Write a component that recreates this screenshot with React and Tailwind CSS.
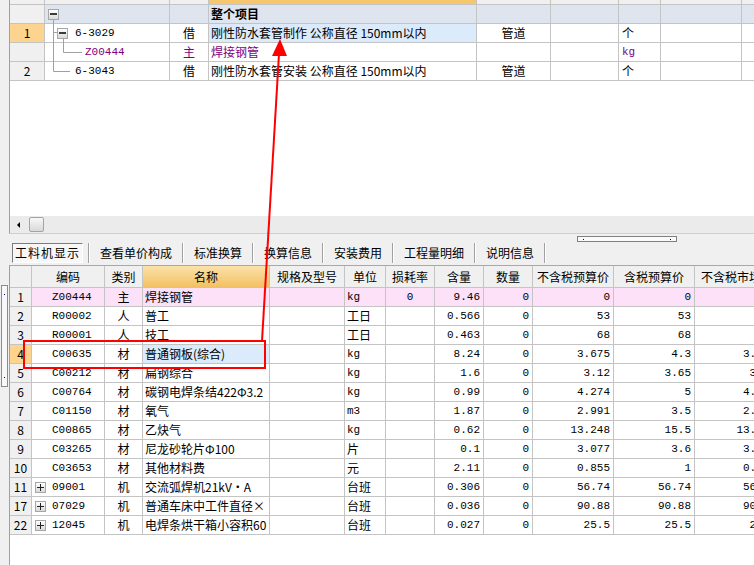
import React from 'react';

const cjk = "font-['Noto_Sans_CJK_SC',sans-serif] text-[12px]";
const mono = "font-['Liberation_Mono','Noto_Sans_CJK_SC',monospace] text-[11px]";
const line = 'border-[#c4c4c4]';

function MinusBox() {
  return (
    <span className="flex h-[11px] w-[11px] shrink-0 items-center justify-center border border-[#a6a6a6] bg-linear-to-b from-white to-[#d9d9d9]">
      <span className="h-[2px] w-[7px] bg-[#3a3a3a]" />
    </span>
  );
}

function PlusBox() {
  return (
    <span className="relative flex h-[11px] w-[11px] shrink-0 items-center justify-center border border-[#a6a6a6] bg-linear-to-b from-white to-[#d9d9d9]">
      <span className="h-[1px] w-[7px] bg-[#222]" />
      <span className="absolute h-[7px] w-[1px] bg-[#222]" />
    </span>
  );
}

const topRows = [
  { num: '1', level: 1, box: true, code: '6-3029', cat: '借', name: '刚性防水套管制作 公称直径 150mm以内', c5: '管道', unit: '个', active: true },
  { num: '', level: 2, code: 'Z00444', cat: '主', name: '焊接钢管', c5: '', unit: 'kg', purple: true },
  { num: '2', level: 1, code: '6-3043', cat: '借', name: '刚性防水套管安装 公称直径 150mm以内', c5: '管道', unit: '个' },
];

function TopGrid() {
  const c = `h-full shrink-0 border-r ${line}`;
  return (
    <div className={`${cjk} leading-[18px] text-black`}>
      <div className={`flex h-[5px] border-b ${line} bg-[#f0f0f0]`}>
        <div className={`${c} w-[35px]`} />
        <div className={`${c} w-[125px]`} />
        <div className={`${c} w-[39px]`} />
        <div className={`${c} w-[268px] bg-[#f5c66e]`} />
        <div className={`${c} w-[74px]`} />
        <div className={`${c} w-[68px]`} />
        <div className={`${c} w-[42px]`} />
        <div className={`${c} w-[81px]`} />
        <div className="flex-1" />
      </div>
      <div className={`flex h-[19px] border-b ${line} bg-[#dee5ee]`}>
        <div className={`${c} w-[35px] bg-[#f0f0f0]`} />
        <div className={`${c} flex w-[125px] items-center pl-[3px]`}>
          <MinusBox />
        </div>
        <div className={`${c} w-[39px]`} />
        <div className={`${c} w-[268px] pl-[2px] font-bold`}>整个项目</div>
        <div className={`${c} w-[74px]`} />
        <div className={`${c} w-[68px]`} />
        <div className={`${c} w-[42px]`} />
        <div className={`${c} w-[81px]`} />
        <div className="flex-1" />
      </div>
      {topRows.map((r, i) => (
        <div key={i} className={`flex h-[19px] border-b ${line} bg-white ${r.purple ? 'text-[#800080]' : ''}`}>
          <div className={`${c} w-[35px] text-center ${r.active ? 'bg-[#fdd48f]' : 'bg-[#f0f0f0]'} text-black`}>{r.num}</div>
          <div className={`${c} flex w-[125px] items-center ${r.box ? 'pl-[12px]' : r.level === 2 ? 'pl-[40px]' : 'pl-[30px]'}`}>
            {r.box && <MinusBox />}
            <span className={`${mono} ${r.box ? 'ml-[7px]' : ''}`}>{r.code}</span>
          </div>
          <div className={`${c} w-[39px] text-center`}>{r.cat}</div>
          <div className={`${c} w-[268px] whitespace-nowrap pl-[2px] ${r.active ? 'bg-[#dcebfb]' : ''}`}>{r.name}</div>
          <div className={`${c} w-[74px] text-center`}>{r.c5}</div>
          <div className={`${c} w-[68px]`} />
          <div className={`${c} w-[42px] pl-[3px] ${r.unit === 'kg' ? mono : ''}`}>{r.unit}</div>
          <div className={`${c} w-[81px]`} />
          <div className="flex-1" />
        </div>
      ))}
    </div>
  );
}

const cols = [22, 73, 38, 127, 75, 41, 49, 49, 49, 81, 81, 85];
const heads = ['', '编码', '类别', '名称', '规格及型号', '单位', '损耗率', '含量', '数量', '不含税预算价', '含税预算价', '不含税市场价'];

const rows = [
  { n: '1', code: 'Z00444', cat: '主', name: '焊接钢管', unit: 'kg', loss: '0', qty: '9.46', cnt: '0', p1: '0', p2: '0', p3: '', pink: true },
  { n: '2', code: 'R00002', cat: '人', name: '普工', unit: '工日', qty: '0.566', cnt: '0', p1: '53', p2: '53', p3: '' },
  { n: '3', code: 'R00001', cat: '人', name: '技工', unit: '工日', qty: '0.463', cnt: '0', p1: '68', p2: '68', p3: '' },
  { n: '4', code: 'C00635', cat: '材', name: '普通钢板(综合)', unit: 'kg', qty: '8.24', cnt: '0', p1: '3.675', p2: '4.3', p3: '3.675', active: true },
  { n: '5', code: 'C00212', cat: '材', name: '扁钢综合', unit: 'kg', qty: '1.6', cnt: '0', p1: '3.12', p2: '3.65', p3: '3.12' },
  { n: '6', code: 'C00764', cat: '材', name: '碳钢电焊条结422Φ3.2', unit: 'kg', qty: '0.99', cnt: '0', p1: '4.274', p2: '5', p3: '4.274' },
  { n: '7', code: 'C01150', cat: '材', name: '氧气', unit: 'm3', qty: '1.87', cnt: '0', p1: '2.991', p2: '3.5', p3: '2.991' },
  { n: '8', code: 'C00865', cat: '材', name: '乙炔气', unit: 'kg', qty: '0.62', cnt: '0', p1: '13.248', p2: '15.5', p3: '13.248' },
  { n: '9', code: 'C03265', cat: '材', name: '尼龙砂轮片Φ100', unit: '片', qty: '0.1', cnt: '0', p1: '3.077', p2: '3.6', p3: '3.077' },
  { n: '10', code: 'C03653', cat: '材', name: '其他材料费', unit: '元', qty: '2.11', cnt: '0', p1: '0.855', p2: '1', p3: '0.855' },
  { n: '11', code: '09001', cat: '机', name: '交流弧焊机21kV·A', unit: '台班', qty: '0.306', cnt: '0', p1: '56.74', p2: '56.74', p3: '56.74', plus: true },
  { n: '17', code: '07029', cat: '机', name: '普通车床中工件直径×', unit: '台班', qty: '0.036', cnt: '0', p1: '90.88', p2: '90.88', p3: '90.88', plus: true },
  { n: '22', code: '12045', cat: '机', name: '电焊条烘干箱小容积60', unit: '台班', qty: '0.027', cnt: '0', p1: '25.5', p2: '25.5', p3: '25.5', plus: true },
];

function BottomGrid() {
  const c = `h-full shrink-0 overflow-hidden whitespace-nowrap border-r ${line}`;
  const num = `${c} ${mono} pr-[3px] text-right`;
  return (
    <div className={`${cjk} leading-[18px] text-black`}>
      <div className={`flex h-[22px] border-b ${line} bg-[#f0f0f0] leading-[21px]`}>
        {heads.map((h, i) => (
          <div
            key={i}
            style={{ width: cols[i] }}
            className={`${c} text-center ${i === 3 ? 'bg-linear-to-b from-[#fbe1a8] to-[#f3c163]' : ''}`}
          >
            {h}
          </div>
        ))}
      </div>
      {rows.map((r) => (
        <div key={r.n} className={`flex h-[19px] border-b ${line} ${r.pink ? 'bg-[#fce1f9]' : 'bg-white'}`}>
          <div style={{ width: cols[0] }} className={`${c} text-center ${r.active ? 'bg-[#fdd38e]' : 'bg-[#f0f0f0]'}`}>{r.n}</div>
          <div style={{ width: cols[1] }} className={`${c} flex items-center ${r.plus ? 'pl-[3px]' : 'pl-[20px]'}`}>
            {r.plus && <PlusBox />}
            <span className={`${mono} ${r.plus ? 'ml-[6px]' : ''}`}>{r.code}</span>
          </div>
          <div style={{ width: cols[2] }} className={`${c} text-center`}>{r.cat}</div>
          <div style={{ width: cols[3] }} className={`${c} pl-[2px] ${r.active ? 'bg-[#dcebfb]' : ''}`}>{r.name}</div>
          <div style={{ width: cols[4] }} className={c} />
          <div style={{ width: cols[5] }} className={`${c} pl-[2px] ${/^[a-z]/.test(r.unit) ? mono : ''}`}>{r.unit}</div>
          <div style={{ width: cols[6] }} className={`${c} ${mono} text-center`}>{r.loss}</div>
          <div style={{ width: cols[7] }} className={num}>{r.qty}</div>
          <div style={{ width: cols[8] }} className={num}>{r.cnt}</div>
          <div style={{ width: cols[9] }} className={num}>{r.p1}</div>
          <div style={{ width: cols[10] }} className={num}>{r.p2}</div>
          <div style={{ width: cols[11] }} className={num}>{r.p3}</div>
        </div>
      ))}
    </div>
  );
}

const tabs = ['查看单价构成', '标准换算', '换算信息', '安装费用', '工程量明细', '说明信息'];

function Sep() {
  return <span className="h-[20px] w-[2px] shrink-0 border-l border-[#a0a0a0] border-r border-r-white" />;
}

export default function App() {
  return (
    <div className="relative h-[565px] w-[754px] overflow-hidden bg-[#f0f0f0]">
      {/* upper grid */}
      <div className="flex h-[234px]">
        <div className="w-[9px] shrink-0" />
        <div className="flex flex-1 flex-col overflow-hidden border-b border-l border-b-[#d0d0d0] border-l-[#a0a0a0] bg-white">
          <TopGrid />
          <div className="flex-1" />
          <div className="flex h-[17px] items-center bg-[#ebebeb]">
            <span className="ml-[7px] h-0 w-0 border-y-[3px] border-r-[3px] border-y-transparent border-r-black" />
            <span className="ml-[9px] h-[15px] w-[15px] rounded-[2px] border border-[#a3a3a3] bg-linear-to-b from-[#f8f8f8] to-[#d8d8d8]" />
          </div>
        </div>
      </div>

      {/* splitter grip */}
      <div className="h-[9px] pl-[577px] pt-[2px]">
        <div className="flex h-[6px] w-[100px] items-center justify-between border border-[#808080] bg-[#fafafa] px-[5px]">
          <span className="h-[1px] w-[1px] bg-[#000080]" />
          <span className="h-[1px] w-[1px] bg-[#000080]" />
        </div>
      </div>

      {/* tabs */}
      <div className={`flex h-[22px] items-start pl-[12px] ${cjk} text-black`}>
        <div className="flex h-[20px] w-[71px] items-center justify-center border border-b-white border-l-[#7c7c7c] border-r-white border-t-[#7c7c7c] bg-[#f7f7f7] tracking-[1px]">
          工料机显示
        </div>
        <span className="ml-[5px]" />
        <Sep />
        {tabs.map((t) => (
          <React.Fragment key={t}>
            <span className="flex h-[20px] items-center px-[10px]">{t}</span>
            <Sep />
          </React.Fragment>
        ))}
      </div>

      {/* lower grid */}
      <div className="flex h-[300px]">
        <div className="w-[9px] shrink-0 pt-[20px]">
          <div className="ml-[1px] flex h-[102px] w-[7px] flex-col items-center justify-between border border-[#8c8c8c] bg-[#f8f8f8] py-[8px]">
            <span className="h-[1px] w-[1px] bg-[#000080]" />
            <span className="h-[1px] w-[1px] bg-[#000080]" />
          </div>
        </div>
        <div className="flex-1 overflow-hidden border-l border-t border-l-[#a0a0a0] border-t-[#a8a8a8] bg-white">
          <BottomGrid />
        </div>
      </div>

      {/* tree connectors and red annotations */}
      <svg className="pointer-events-none absolute left-0 top-0" width="754" height="565">
        <g stroke="#a0a0a0" strokeWidth="1" fill="none">
          <path d="M53.5 20V71.5H70" />
          <path d="M53.5 32.5H57" />
          <path d="M63.5 38V52.5H82" />
        </g>
        <line x1="262" y1="341" x2="279" y2="54" stroke="#ff0000" strokeWidth="2" />
        <polygon points="280,39 272,56 287,56" fill="#ff0000" />
        <rect x="24" y="341" width="241" height="27" fill="none" stroke="#ff0000" strokeWidth="2" />
      </svg>
    </div>
  );
}
